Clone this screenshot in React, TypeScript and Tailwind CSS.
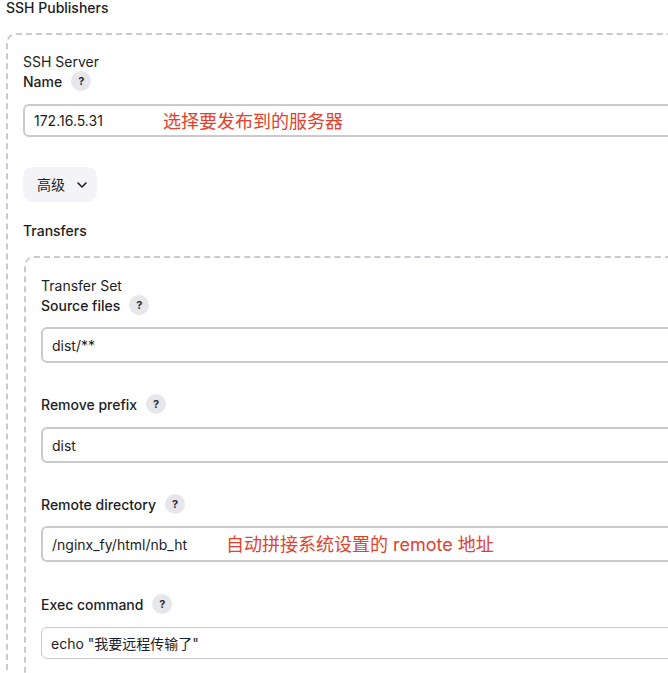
import React from 'react';
import { ChevronDown } from 'lucide-react';

const Help = () => (
  <span className="ml-[9px] inline-flex h-[20px] w-[20px] items-center justify-center rounded-full bg-[#e6e6eb] text-[11px] font-bold leading-none text-[#2b2b33]">
    ?
  </span>
);

const Label = ({ children, className = '' }: { children: React.ReactNode; className?: string }) => (
  <div className={`flex h-[20px] items-center text-[14px] font-medium text-[#1d1d24] ${className}`}>
    {children}
    <Help />
  </div>
);

const Field = ({
  value,
  note,
  noteLeft,
  h,
  className = '',
}: {
  value: string;
  note?: string;
  noteLeft?: string;
  h: string;
  className?: string;
}) => (
  <div
    className={`relative flex items-center rounded-[6px] border-2 border-[#c8cacf] bg-white pl-[9px] text-[14px] text-[#1d1d24] ${h} ${className}`}
  >
    {value}
    {note && (
      <span className={`absolute top-1/2 -translate-y-1/2 text-[18px] text-[#e2412d] ${noteLeft}`}>{note}</span>
    )}
  </div>
);

export default function App() {
  return (
    <div className="h-[673px] w-[668px] overflow-hidden bg-white font-['Inter','Noto_Sans_CJK_SC',sans-serif]">
      <div className="w-[1000px] pl-[6px]">
        <div className="h-[33px] text-[14px] font-medium leading-[16px] text-[#1d1d24]">SSH Publishers</div>

        <div className="rounded-[10px] border-2 border-dashed border-[#c9cacf] pl-[15px] pt-[16px] pb-[40px]">
          <div className="flex h-[20px] items-center text-[14px] text-[#1d1d24]">SSH Server</div>
          <Label>Name</Label>
          <Field value="172.16.5.31" note="选择要发布到的服务器" noteLeft="left-[138px]" h="h-[33px]" className="mt-[13px]" />

          <button className="mt-[30px] flex h-[35px] w-[74px] items-center gap-[9px] rounded-[10px] bg-[#f4f4f8] pl-[14px] text-[14px] text-[#1d1d24]">
            高级
            <ChevronDown size={16} strokeWidth={2.4} />
          </button>

          <div className="mt-[18px] flex h-[20px] items-center text-[14px] font-medium text-[#1d1d24]">Transfers</div>

          <div className="ml-[1px] mt-[16px] rounded-[10px] border-2 border-dashed border-[#c9cacf] pl-[15px] pt-[17px] pb-[40px]">
            <div className="flex h-[20px] items-center text-[14px] text-[#1d1d24]">Transfer Set</div>
            <Label>Source files</Label>
            <Field value="dist/**" h="h-[36px]" className="mt-[12px]" />

            <Label className="mt-[31px]">Remove prefix</Label>
            <Field value="dist" h="h-[36px]" className="mt-[13px]" />

            <Label className="mt-[31px]">Remote directory</Label>
            <Field
              value="/nginx_fy/html/nb_ht"
              note="自动拼接系统设置的 remote 地址"
              noteLeft="left-[183px]"
              h="h-[36px]"
              className="mt-[12px]"
            />

            <Label className="mt-[32px]">Exec command</Label>
            <Field value={'echo "我要远程传输了"'} h="h-[32px]" className="mt-[13px] border-[1.5px]" />
          </div>
        </div>
      </div>
    </div>
  );
}
